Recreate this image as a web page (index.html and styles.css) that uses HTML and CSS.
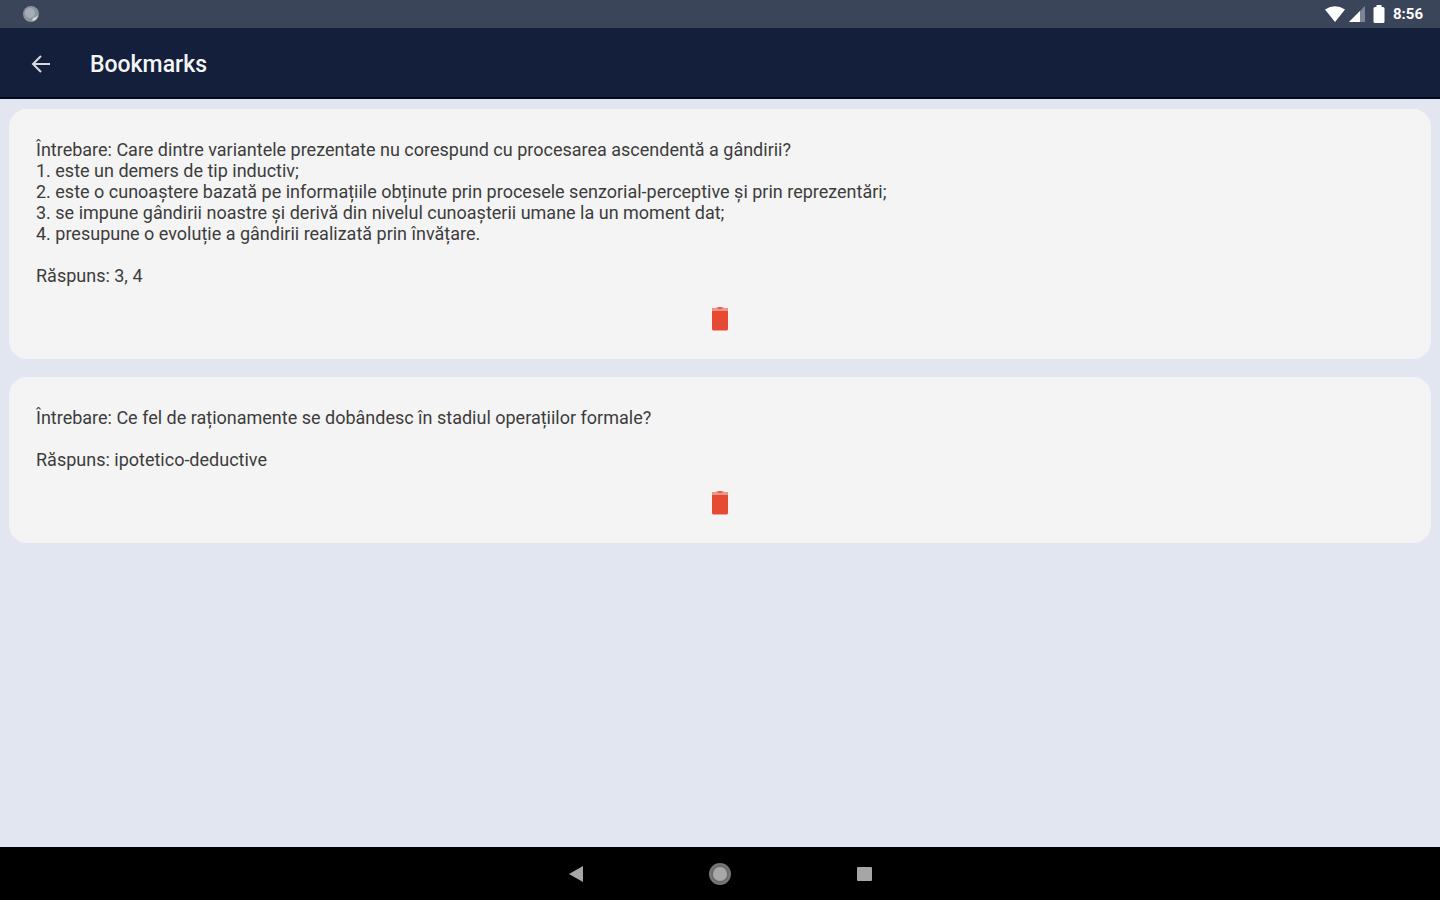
FILE: index.html
```html
<!DOCTYPE html>
<html lang="ro">
<head>
    <meta charset="UTF-8">
    <meta name="viewport" content="width=device-width, initial-scale=1.0">
    <title>Bookmarks</title>
    <link rel="stylesheet" href="styles.css">
</head>
<body>
    <div class="status-bar">
        <svg class="status-app" width="18" height="18" viewBox="0 0 18 18" aria-hidden="true">
            <circle cx="9" cy="9" r="8" fill="#8b94a2"/>
            <circle cx="8" cy="8" r="5" fill="#a6adb8"/>
            <path d="M16 10a7 7 0 0 1-6 6l1-3 3-1z" fill="#d5dae0"/>
        </svg>
        <div class="status-icons">
            <svg width="20" height="18" viewBox="0 0 20 18" aria-hidden="true">
                <path d="M0 4.500Q10-2 20 4.500L10 17z" fill="#fff"/>
            </svg>
            <svg width="17" height="18" viewBox="0 0 17 18" aria-hidden="true">
                <path d="M16 1v16H0z" fill="#7c8593"/>
                <path d="M11 6v11H0z" fill="#fff"/>
            </svg>
            <svg class="battery" width="12" height="18" viewBox="0 0 12 18" aria-hidden="true">
                <path d="M3.500 0h5v2H10q1.500 0 1.500 1.500v13Q11.500 18 10 18H2Q.5 18 .5 16.500v-13Q.5 2 2 2h1.500z" fill="#fff"/>
            </svg>
            <span class="clock">8:56</span>
        </div>
    </div>

    <header class="app-bar">
        <button class="back" type="button" aria-label="Back">
            <svg width="20" height="20" viewBox="0 0 20 20" fill="none" stroke="#d5d9e1" stroke-width="2">
                <path d="M19 9H2M10 1L2 9l8 8"/>
            </svg>
        </button>
        <h1>Bookmarks</h1>
    </header>

    <main class="bookmarks">
        <article class="card">
            <p>Întrebare: Care dintre variantele prezentate nu corespund cu procesarea ascendentă a gândirii?<br>
            1. este un demers de tip inductiv;<br>
            2. este o cunoaștere bazată pe informațiile obținute prin procesele senzorial-perceptive și prin reprezentări;<br>
            3. se impune gândirii noastre și derivă din nivelul cunoașterii umane la un moment dat;<br>
            4. presupune o evoluție a gândirii realizată prin învățare.</p>
            <p>Răspuns: 3, 4</p>
            <button class="delete" type="button" aria-label="Delete">
                <svg width="18" height="24" viewBox="0 0 18 24">
                    <path d="M6 0h6l1 1h4v3H1V1h4z" fill="#eb9488"/>
                    <path d="M7 0h4v2H7z" fill="#e0604f"/>
                    <path d="M1 4h16v18q0 1.500-1.500 1.500h-13Q1 23.500 1 22z" fill="#e64a33"/>
                </svg>
            </button>
        </article>

        <article class="card">
            <p>Întrebare: Ce fel de raționamente se dobândesc în stadiul operațiilor formale?</p>
            <p>Răspuns: ipotetico-deductive</p>
            <button class="delete" type="button" aria-label="Delete">
                <svg width="18" height="24" viewBox="0 0 18 24">
                    <path d="M6 0h6l1 1h4v3H1V1h4z" fill="#eb9488"/>
                    <path d="M7 0h4v2H7z" fill="#e0604f"/>
                    <path d="M1 4h16v18q0 1.500-1.500 1.500h-13Q1 23.500 1 22z" fill="#e64a33"/>
                </svg>
            </button>
        </article>
    </main>

    <nav class="nav-bar">
        <button type="button" aria-label="Back">
            <svg width="24" height="24" viewBox="0 0 24 24"><path d="M5 12l14-8v16z" fill="#a6a6a6"/></svg>
        </button>
        <button type="button" aria-label="Home">
            <svg width="24" height="24" viewBox="0 0 24 24">
                <circle cx="12" cy="12" r="10" fill="#6c6c6c" stroke="#777" stroke-width="2"/>
                <circle cx="12" cy="12" r="7" fill="#a8a8a8"/>
            </svg>
        </button>
        <button type="button" aria-label="Overview">
            <svg width="24" height="24" viewBox="0 0 24 24"><rect x="5" y="5" width="15" height="14" rx="1" fill="#a6a6a6"/></svg>
        </button>
    </nav>
</body>
</html>
```
FILE: styles.css
```css
* {
    box-sizing: border-box;
}
body {
    display: flex;
    flex-direction: column;
    min-height: 100vh;
    margin: 0;
    background-color: #e2e6f1;
    color: #3c3c3c;
    font-family: Roboto, "Liberation Sans", sans-serif;
    font-size: 18px;
    line-height: 21px;
}
button {
    display: flex;
    align-items: center;
    justify-content: center;
    padding: 0;
    border: none;
    background: none;
    cursor: pointer;
}

/* Top bars */
.status-bar {
    display: flex;
    align-items: center;
    justify-content: space-between;
    height: 28px;
    padding: 0 17px 0 22px;
    background-color: #3a455a;
}
.status-icons {
    display: flex;
    align-items: center;
    gap: 4px;
}
.battery {
    margin-left: 3px;
}
.clock {
    margin-left: 4px;
    color: #fff;
    font-size: 15px;
    font-weight: 700;
}
.app-bar {
    display: flex;
    align-items: center;
    gap: 36px;
    height: 71px;
    padding: 5px 28px 0;
    background-color: #14203b;
    border-bottom: 2px solid #050a20;
}
.back {
    width: 26px;
    height: 40px;
}
.app-bar h1 {
    margin: 0;
    color: #f4f5f7;
    font-size: 23px;
    font-weight: 500;
    line-height: 28px;
}

/* Bookmark cards */
.bookmarks {
    display: flex;
    flex: 1;
    flex-direction: column;
    gap: 18px;
    padding: 10px 9px;
}
.card {
    padding: 30px 27px 28px;
    background-color: #f4f4f4;
    border-radius: 18px;
}
.card p {
    margin: 0 0 21px;
}
.delete {
    width: 24px;
    height: 24px;
    margin: 0 auto;
}

/* System navigation */
.nav-bar {
    display: flex;
    align-items: center;
    justify-content: center;
    gap: 96px;
    height: 53px;
    background-color: #000;
}
.nav-bar button {
    width: 48px;
    height: 48px;
}
```
